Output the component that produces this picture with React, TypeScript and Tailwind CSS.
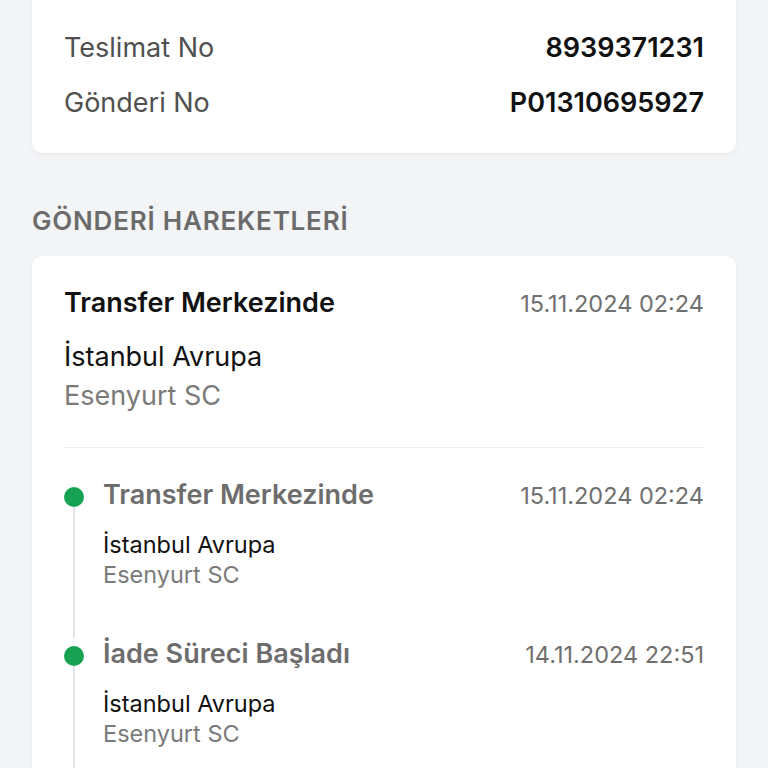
import React from 'react'

const FONT = { fontFamily: '"Inter", "Noto Sans", "Liberation Sans", sans-serif' }

type Move = { title: string; date: string; city: string; branch: string }

const moves: Move[] = [
  { title: 'Transfer Merkezinde', date: '15.11.2024 02:24', city: 'İstanbul Avrupa', branch: 'Esenyurt SC' },
  { title: 'İade Süreci Başladı', date: '14.11.2024 22:51', city: 'İstanbul Avrupa', branch: 'Esenyurt SC' },
]

function InfoRow({ label, value }: { label: string; value: string }) {
  return (
    <div className="flex items-center justify-between leading-[55px] text-[27px]">
      <span className="text-[#505050]">{label}</span>
      <span className="font-semibold text-[#111]">{value}</span>
    </div>
  )
}

function TimelineItem({ move }: { move: Move }) {
  return (
    <div className="flex">
      <div className="flex w-5 flex-col items-center">
        <div className="mt-[8px] h-5 w-5 shrink-0 rounded-full bg-[#17a253]" />
        <div className="w-[2px] flex-1 bg-[#e4e4e4]" />
      </div>
      <div className="ml-[19px] flex-1 pb-12">
        <div className="flex items-baseline justify-between">
          <span className="text-[27px] font-semibold leading-8 text-[#6d6d6d]">{move.title}</span>
          <span className="text-[23.5px] leading-8 text-[#6f6f6f]">{move.date}</span>
        </div>
        <p className="mt-[18px] text-[23.5px] leading-[30px] text-[#111]">{move.city}</p>
        <p className="text-[23.5px] leading-[30px] text-[#7a7a7a]">{move.branch}</p>
      </div>
    </div>
  )
}

export default function App() {
  const last = moves[0]
  return (
    <div style={FONT} className="h-[768px] overflow-hidden bg-[#f3f4f6] px-8">
      <div className="-mt-5 rounded-[10px] bg-white px-8 pt-10 pb-[23px] shadow-[0_1px_4px_rgba(0,0,0,0.06)]">
        <InfoRow label="Teslimat No" value="8939371231" />
        <InfoRow label="Gönderi No" value="P01310695927" />
      </div>

      <h2 className="mt-[52px] mb-[19px] text-[26px] font-semibold leading-8 tracking-[0.8px] text-[#6b6b6b]">
        GÖNDERİ HAREKETLERİ
      </h2>

      <div className="rounded-[10px] bg-white px-8 pt-[29px] shadow-[0_1px_4px_rgba(0,0,0,0.06)]">
        <div className="flex items-baseline justify-between">
          <span className="text-[27px] font-semibold leading-9 text-[#111]">{last.title}</span>
          <span className="text-[23.5px] leading-9 text-[#6f6f6f]">{last.date}</span>
        </div>
        <p className="mt-[17px] text-[27px] leading-9 text-[#111]">{last.city}</p>
        <p className="mt-[3px] text-[27px] leading-9 text-[#7a7a7a]">{last.branch}</p>

        <div className="mt-[33px] h-px bg-[#f0f0f0]" />

        <div className="pt-[31px]">
          {moves.map((m, i) => (
            <TimelineItem key={i} move={m} />
          ))}
        </div>
      </div>
    </div>
  )
}
